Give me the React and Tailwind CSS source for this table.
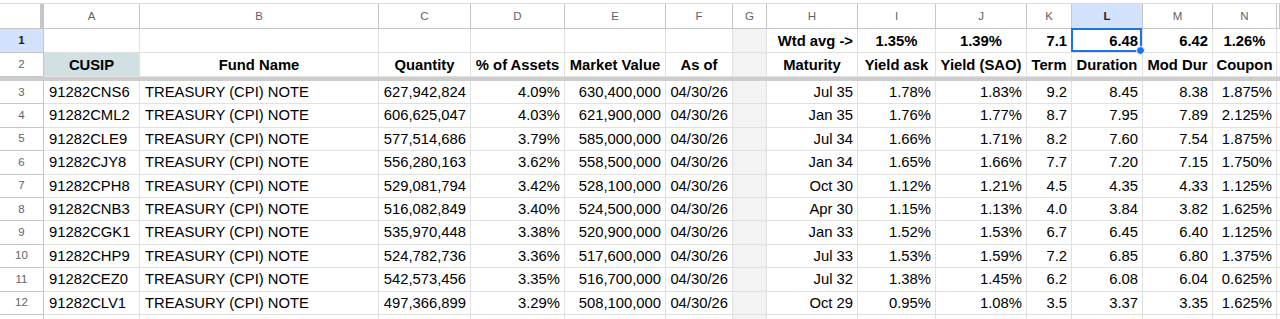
import React from "react";

const GRID =
  "grid grid-cols-[44px_96px_239px_92px_94px_101px_67px_34px_91px_78px_91px_45px_71px_70px_64px_1fr]";

const letters = ["A", "B", "C", "D", "E", "F", "G", "H", "I", "J", "K", "L", "M", "N", ""];

const rows = [
  ["91282CNS6", "TREASURY (CPI) NOTE", "627,942,824", "4.09%", "630,400,000", "04/30/26", "", "Jul 35", "1.78%", "1.83%", "9.2", "8.45", "8.38", "1.875%"],
  ["91282CML2", "TREASURY (CPI) NOTE", "606,625,047", "4.03%", "621,900,000", "04/30/26", "", "Jan 35", "1.76%", "1.77%", "8.7", "7.95", "7.89", "2.125%"],
  ["91282CLE9", "TREASURY (CPI) NOTE", "577,514,686", "3.79%", "585,000,000", "04/30/26", "", "Jul 34", "1.66%", "1.71%", "8.2", "7.60", "7.54", "1.875%"],
  ["91282CJY8", "TREASURY (CPI) NOTE", "556,280,163", "3.62%", "558,500,000", "04/30/26", "", "Jan 34", "1.65%", "1.66%", "7.7", "7.20", "7.15", "1.750%"],
  ["91282CPH8", "TREASURY (CPI) NOTE", "529,081,794", "3.42%", "528,100,000", "04/30/26", "", "Oct 30", "1.12%", "1.21%", "4.5", "4.35", "4.33", "1.125%"],
  ["91282CNB3", "TREASURY (CPI) NOTE", "516,082,849", "3.40%", "524,500,000", "04/30/26", "", "Apr 30", "1.15%", "1.13%", "4.0", "3.84", "3.82", "1.625%"],
  ["91282CGK1", "TREASURY (CPI) NOTE", "535,970,448", "3.38%", "520,900,000", "04/30/26", "", "Jan 33", "1.52%", "1.53%", "6.7", "6.45", "6.40", "1.125%"],
  ["91282CHP9", "TREASURY (CPI) NOTE", "524,782,736", "3.36%", "517,600,000", "04/30/26", "", "Jul 33", "1.53%", "1.59%", "7.2", "6.85", "6.80", "1.375%"],
  ["91282CEZ0", "TREASURY (CPI) NOTE", "542,573,456", "3.35%", "516,700,000", "04/30/26", "", "Jul 32", "1.38%", "1.45%", "6.2", "6.08", "6.04", "0.625%"],
  ["91282CLV1", "TREASURY (CPI) NOTE", "497,366,899", "3.29%", "508,100,000", "04/30/26", "", "Oct 29", "0.95%", "1.08%", "3.5", "3.37", "3.35", "1.625%"],
];

const row1 = ["", "", "", "", "", "", "", "Wtd avg ->", "1.35%", "1.39%", "7.1", "6.48", "6.42", "1.26%"];
const row1Align = ["l", "l", "l", "l", "l", "l", "l", "r", "c", "c", "r", "r", "r", "c"];
const row2 = ["CUSIP", "Fund Name", "Quantity", "% of Assets", "Market Value", "As of", "", "Maturity", "Yield ask", "Yield (SAO)", "Term", "Duration", "Mod Dur", "Coupon"];
const dataAlign = ["l", "l", "r", "r", "r", "r", "l", "r", "r", "r", "r", "r", "r", "r"];

const alignCls = {
  l: "justify-start pl-[5px] pr-[3px]",
  r: "justify-end pr-[4px] pl-[3px]",
  c: "justify-center px-[3px]",
};

function Cell({ children, align = "l", bold = false, bg = "", extra = "" }) {
  return (
    <div
      className={`relative flex items-center overflow-visible whitespace-nowrap border-r border-b border-[#e1e1e1] text-[14.8px] text-black ${
        alignCls[align]
      } ${bold ? "font-bold" : ""} ${bg} ${extra}`}
    >
      {children}
    </div>
  );
}

function RowNum({ n, active = false }) {
  return (
    <div
      className={`flex items-center justify-center border-r border-b border-[#c4c7c5] text-[11.5px] ${
        active ? "bg-[#d3e3fd] font-bold text-[#1f1f1f]" : "bg-white text-[#5f6368]"
      }`}
    >
      {n}
    </div>
  );
}

export default function App() {
  return (
    <div
      className="h-[319px] w-[1280px] overflow-hidden bg-white pt-[3px]"
      style={{ fontFamily: '"Liberation Sans", Arial, sans-serif' }}
    >
      {/* column header row */}
      <div className={`${GRID} h-[26px] border-t border-[#dadce0]`}>
        <div className="border-r-4 border-b border-r-[#c4c7c5] border-b-[#c4c7c5] bg-white" />
        {letters.map((l, i) => (
          <div
            key={i}
            className={`flex items-center justify-center border-r border-b border-[#c4c7c5] pt-[1px] text-[11.5px] ${
              l === "L" ? "bg-[#d3e3fd] font-bold text-[#1f1f1f]" : "bg-white text-[#5f6368]"
            }`}
          >
            {l}
          </div>
        ))}
      </div>

      {/* row 1 */}
      <div className={`${GRID} h-[24px]`}>
        <RowNum n={1} active />
        {row1.map((v, i) => (
          <Cell key={i} align={row1Align[i]} bold bg={i === 6 ? "bg-[#f3f3f3]" : ""} extra="pt-[1px]">
            {v}
            {i === 11 && (
              <div className="pointer-events-none absolute -top-[1px] -left-[1px] right-0 bottom-0 border-2 border-[#1a73e8]">
                <div className="absolute -right-[5px] -bottom-[5px] h-[9px] w-[9px] rounded-full border border-white bg-[#1a73e8]" />
              </div>
            )}
          </Cell>
        ))}
        <Cell />
      </div>

      {/* row 2 */}
      <div className={`${GRID} h-[24px]`}>
        <RowNum n={2} />
        {row2.map((v, i) => (
          <Cell
            key={i}
            align="c"
            bold
            bg={i === 0 ? "bg-[#d0e0e3]" : i === 6 ? "bg-[#f3f3f3]" : ""}
            extra="pt-[1px]"
          >
            {v}
          </Cell>
        ))}
        <Cell />
      </div>

      {/* freeze bar */}
      <div className="h-[4px] bg-[#cdcdcd]" />

      {/* data rows */}
      {rows.map((r, ri) => (
        <div key={ri} className={`${GRID} h-[23.4px]`}>
          <RowNum n={ri + 3} />
          {r.map((v, i) => (
            <Cell key={i} align={dataAlign[i]} bg={i === 6 ? "bg-[#f3f3f3]" : ""}>
              {v}
            </Cell>
          ))}
          <Cell />
        </div>
      ))}

      {/* row 13 (only its top edge is visible) */}
      <div className={`${GRID} h-[23.4px]`}>
        <RowNum n="" />
        {row1.map((_, i) => (
          <Cell key={i} bg={i === 6 ? "bg-[#f3f3f3]" : ""} />
        ))}
        <Cell />
      </div>
    </div>
  );
}
